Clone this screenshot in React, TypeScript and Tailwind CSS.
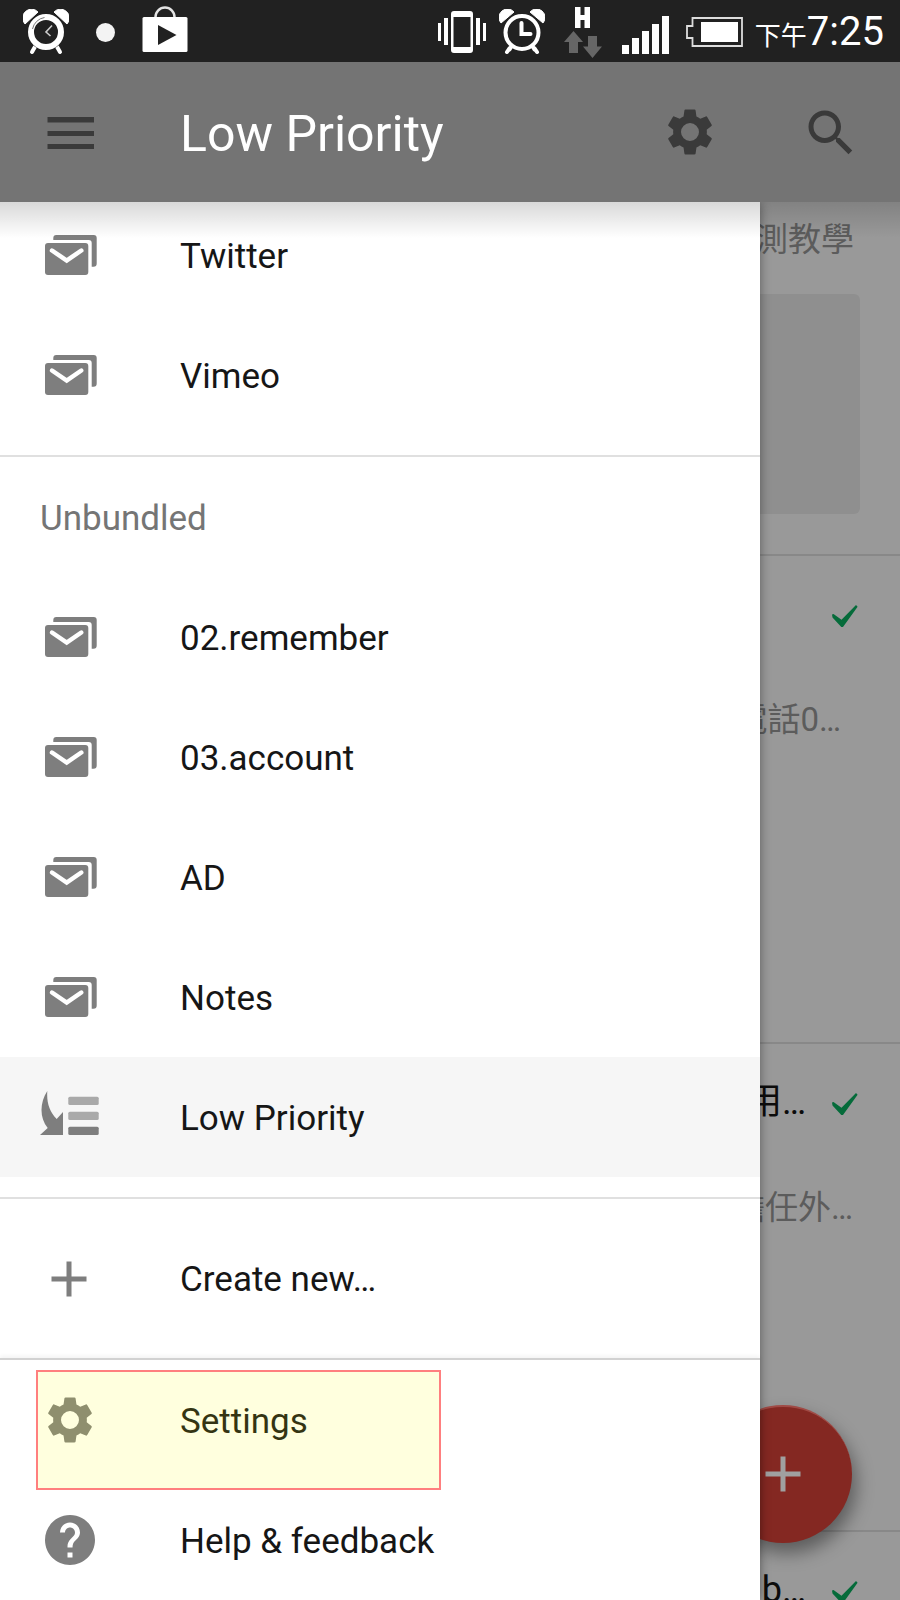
import type { ReactNode } from "react";

const GEAR =
  "M19.43 12.98c.04-.32.07-.64.07-.98s-.03-.66-.07-.98l2.11-1.65c.19-.15.24-.42.12-.64l-2-3.46c-.12-.22-.39-.3-.61-.22l-2.49 1c-.52-.4-1.08-.73-1.69-.98l-.38-2.65C14.46 2.18 14.25 2 14 2h-4c-.25 0-.46.18-.49.42l-.38 2.65c-.61.25-1.17.59-1.69.98l-2.49-1c-.23-.09-.49 0-.61.22l-2 3.46c-.13.22-.07.49.12.64l2.11 1.65c-.04.32-.07.65-.07.98s.03.66.07.98l-2.11 1.65c-.19.15-.24.42-.12.64l2 3.46c.12.22.39.3.61.22l2.49-1c.52.4 1.08.73 1.69.98l.38 2.65c.03.24.24.42.49.42h4c.25 0 .46-.18.49-.42l.38-2.65c.61-.25 1.17-.59 1.69-.98l2.49 1c.23.09.49 0 .61-.22l2-3.46c.12-.22.07-.49-.12-.64l-2.11-1.65zM12 16a4 4 0 1 1 0-8 4 4 0 0 1 0 8z";

function Icon({ children, viewBox = "0 0 60 60" }: { children: ReactNode; viewBox?: string }) {
  return (
    <svg viewBox={viewBox} className="size-[60px] shrink-0" fill="currentColor" aria-hidden="true">
      {children}
    </svg>
  );
}

const GearIcon = () => (
  <Icon viewBox="-1.35 -1.35 26.7 26.7">
    <path d={GEAR} />
  </Icon>
);

const MailIcon = () => (
  <Icon>
    <path d="M13.300 16V13a3 3 0 0 1 3-3H53.700a3 3 0 0 1 3 3v25.500a3.200 3.200 0 0 1-3.200 3.200H51.700V18a3 3 0 0 0-3-3H13.300z" />
    <rect x="5" y="18" width="43.300" height="32" rx="3" />
    <path
      d="M12 25.500l14.700 10 14.600-10"
      fill="none"
      stroke="#fff"
      strokeWidth="4.500"
      strokeLinecap="round"
    />
  </Icon>
);

const LowPriorityIcon = () => (
  <Icon>
    <path d="M7.300 4C-.5 16-.5 31 7.700 41L0 48h23V25l-6.300 7C9.500 24 6.500 16 7.300 4z" />
    <rect x="28.300" y="9.700" width="30.400" height="8.300" rx="1.500" fill="#a9a9a9" />
    <rect x="28.300" y="24.700" width="30.400" height="8.300" rx="1.500" fill="#a9a9a9" />
    <rect x="28.300" y="39.700" width="30.400" height="8.300" rx="1.500" />
  </Icon>
);

const PlusIcon = () => (
  <Icon>
    <path d="M26.500 13.500h5v15h15v5h-15v15h-5v-15h-15v-5h15z" />
  </Icon>
);

const HelpIcon = () => (
  <Icon viewBox="0 0 24 24">
    <path d="M12 2C6.480 2 2 6.480 2 12s4.480 10 10 10 10-4.480 10-10S17.520 2 12 2zm1 17h-2v-2h2v2zm2.070-7.750l-.9.920C13.450 12.900 13 13.500 13 15h-2v-.5c0-1.100.45-2.100 1.170-2.830l1.240-1.260c.37-.36.59-.86.59-1.410 0-1.100-.9-2-2-2s-2 .9-2 2H8c0-2.210 1.790-4 4-4s4 1.790 4 4c0 .88-.36 1.680-.93 2.250z" />
  </Icon>
);

const CheckIcon = () => (
  <svg viewBox="0 0 26 22" className="h-[22px] w-[26px] shrink-0" fill="#056b3a" aria-hidden="true">
    <path d="M0 9.500 1.500 9 9.500 14.800 24 0l1.600 1.800L11 22H9.300L.5 12.500z" />
  </svg>
);

function Row({ icon, label, active }: { icon: ReactNode; label: string; active?: boolean }) {
  return (
    <button
      type="button"
      className={
        active
          ? "flex h-[120px] w-full shrink-0 items-center gap-20 bg-[#f6f6f6] px-10 text-left"
          : "flex h-[120px] w-full shrink-0 items-center gap-20 px-10 text-left"
      }
    >
      <span className="text-[#7e7e7e]">{icon}</span>
      <span className="pt-1 text-[35px] leading-10 text-[#161616]">{label}</span>
    </button>
  );
}

function StatusBar() {
  return (
    <header className="flex h-[62px] shrink-0 items-center justify-between bg-[#212121] pt-0.5 pr-4 pl-[23px] text-white">
      <div className="flex items-center">
        <svg viewBox="0 0 46 46" className="size-[46px]" aria-label="Alarm">
          <path d="M2 15a8 8 0 0 1 13-12zM44 15A8 8 0 0 0 31 3z" fill="#fff" stroke="#fff" strokeWidth="1" strokeLinejoin="round" />
          <path d="M13 36l-4 7M33 36l4 7" stroke="#fff" strokeWidth="4" strokeLinecap="round" />
          <circle cx="23" cy="23" r="18.500" fill="#212121" />
          <circle cx="23" cy="23" r="15" fill="#212121" stroke="#fff" strokeWidth="6" />
          <path d="M9.500 20a14.500 14.500 0 0 1 12-11.500" fill="none" stroke="#777" strokeWidth="1" />
          <path d="M29 16.500l-6 6.500 4.500 4" fill="none" stroke="#ccc" strokeWidth="1.600" />
        </svg>
        <span className="ml-[27px] size-[19px] rounded-full bg-[#f3f3f3]" />
        <svg viewBox="0 0 46 48" className="mb-1.5 ml-[27px] h-[48px] w-[46px]" aria-label="Play Store">
          <path d="M13.500 14v-2a9.500 9.500 0 0 1 19 0v2" fill="none" stroke="#e4e4e4" strokeWidth="2.500" />
          <rect x=".5" y="12" width="45" height="35" rx="1.500" fill="#fff" />
          <path d="M16 20v20l18.500-10z" fill="#212121" />
        </svg>
      </div>
      <div className="flex items-center">
        <svg viewBox="0 0 48 42" className="h-[42px] w-[48px]" fill="#fff" aria-label="Vibrate">
          <rect y="12" width="3" height="18" />
          <rect x="6" y="7" width="4" height="27" />
          <rect x="38" y="7" width="4" height="27" />
          <rect x="45" y="12" width="3" height="18" />
          <path fillRule="evenodd" d="M16 0h16a3 3 0 0 1 3 3v36a3 3 0 0 1-3 3H16a3 3 0 0 1-3-3V3a3 3 0 0 1 3-3zm-.5 6v30h17V6z" />
        </svg>
        <svg viewBox="0 0 46 46" className="ml-[13px] size-[46px]" aria-label="Alarm set">
          <path d="M2 14a8 8 0 0 1 13-11zM44 14A8 8 0 0 0 31 3z" fill="#fff" stroke="#fff" strokeWidth="1" strokeLinejoin="round" />
          <path d="M12 37l-4 6M34 37l4 6" stroke="#fff" strokeWidth="4" strokeLinecap="round" />
          <circle cx="23" cy="23.500" r="19.500" fill="#212121" />
          <circle cx="23" cy="23.500" r="16.500" fill="#212121" stroke="#fff" strokeWidth="4" />
          <path d="M12 38l-1.500 2.500M34 38l1.500 2.500" stroke="#fff" strokeWidth="4" strokeLinecap="round" />
          <path d="M22.500 14v11h9" fill="none" stroke="#fff" strokeWidth="4" strokeLinecap="round" />
        </svg>
        <svg viewBox="0 0 38 52" className="ml-[19px] h-[52px] w-[38px]" aria-label="Mobile data">
          <path d="M11 1h5.500v8h4V1H26v21h-5.500v-8h-4v8H11z" fill="#fff" />
          <path d="M9.500 25l9.500 11h-5v11H5V36H0zM28.500 52L38 40.500h-5V30h-9v10.500h-5z" fill="#666" />
        </svg>
        <svg viewBox="0 0 47 38" className="mt-[5px] ml-5 h-[38px] w-[47px]" fill="#fff" aria-label="Signal">
          <rect y="29" width="7" height="9" />
          <rect x="10" y="22" width="7" height="16" />
          <rect x="20" y="15" width="7" height="23" />
          <rect x="30" y="8" width="7" height="30" />
          <rect x="40" width="7" height="38" />
        </svg>
        <svg viewBox="0 0 57 30" className="ml-[17px] h-[30px] w-[57px]" aria-label="Battery">
          <path d="M6.500 1H56v28H6.500v-8H1V9h5.500z" fill="none" stroke="#ddd" strokeWidth="1.800" />
          <rect x="15" y="5" width="37" height="20" fill="#fff" />
        </svg>
        <p className="ml-3 flex items-baseline leading-[46px]">
          <span className="font-['Noto_Sans_CJK_TC',sans-serif] text-[26px] leading-10">下午</span>
          <span className="text-[40px]">7:25</span>
        </p>
      </div>
    </header>
  );
}

function MailItem({ title, body }: { title?: string; body: ReactNode }) {
  return (
    <article className="flex h-[488px] shrink-0 flex-col border-b-2 border-[#888888]">
      <div className="mt-9 flex h-12 items-center justify-end gap-[26px] pr-[42px]">
        {title && <h2 className="whitespace-nowrap pb-1 text-[36px] leading-[48px] text-[#0c0c0c]">{title}</h2>}
        <CheckIcon />
      </div>
      <div className="mt-14 flex h-12 items-center justify-end whitespace-nowrap text-[33px] leading-[48px] text-[#5c5c5c]">
        {body}
      </div>
    </article>
  );
}

export default function App() {
  return (
    <div className="flex h-screen flex-col overflow-hidden bg-[#999999] font-[Roboto,'Noto_Sans_CJK_TC',sans-serif]">
      <StatusBar />
      <div className="relative z-20 flex h-[140px] shrink-0 items-center gap-20 bg-[#747474] px-10 text-[#3a3a3a]">
        <button type="button" aria-label="Menu">
          <Icon>
            <path d="M7.500 15H54v5.500H7.500zM7.500 29H54v5H7.500zM7.500 42H54v5H7.500z" />
          </Icon>
        </button>
        <h1 className="flex-1 pt-1 text-[50px] leading-[60px] text-white">Low Priority</h1>
        <button type="button" aria-label="Settings">
          <GearIcon />
        </button>
        <button type="button" aria-label="Search">
          <Icon viewBox="-0.4 -0.4 24 24">
            <path d="M15.500 14h-.79l-.28-.27C15.410 12.590 16 11.110 16 9.500 16 5.910 13.090 3 9.500 3S3 5.910 3 9.500 5.910 16 9.500 16c1.610 0 3.090-.59 4.230-1.570l.27.28v.79l5 4.990L20.490 19l-4.990-5zm-6 0C7.010 14 5 11.990 5 9.500S7.010 5 9.500 5 14 7.010 14 9.500 11.990 14 9.500 14z" />
          </Icon>
        </button>
      </div>

      <div className="relative flex min-h-0 flex-1">
        <nav className="z-10 flex min-w-0 flex-1 flex-col bg-white shadow-[0_0_10px_rgba(0,0,0,0.4)]">
          <div className="flex min-h-0 flex-1 flex-col justify-end overflow-hidden">
            <section className="shrink-0 border-b-2 border-[#e0e0e0] pb-5">
              <Row icon={<MailIcon />} label="Twitter" />
              <Row icon={<MailIcon />} label="Vimeo" />
            </section>
            <section className="shrink-0 border-b-2 border-[#e0e0e0] pb-5">
              <h2 className="flex h-[120px] items-center px-10 pt-[3px] text-[35px] leading-10 text-[#757575]">Unbundled</h2>
              <Row icon={<MailIcon />} label="02.remember" />
              <Row icon={<MailIcon />} label="03.account" />
              <Row icon={<MailIcon />} label="AD" />
              <Row icon={<MailIcon />} label="Notes" />
              <Row icon={<LowPriorityIcon />} label="Low Priority" active />
            </section>
            <section className="shrink-0 pt-[19px] pb-5">
              <Row icon={<PlusIcon />} label="Create new…" />
            </section>
          </div>
          <div className="relative shrink-0 border-t-2 border-[#d2d2d2] shadow-[0_-2px_4px_rgba(0,0,0,0.05)]">
            <Row icon={<GearIcon />} label="Settings" />
            <Row icon={<HelpIcon />} label="Help & feedback" />
            <div className="pointer-events-none absolute top-[10px] left-9 h-[120px] w-[405px] border-2 border-[#ff7f7f] bg-[#ffff00]/13" />
          </div>
        </nav>

        <main className="relative flex w-[140px] shrink-0 flex-col overflow-hidden">
          <article className="flex h-[354px] shrink-0 flex-col border-b-2 border-[#888888] pt-3.5">
            <p className="flex justify-end whitespace-nowrap pr-[46px] text-[33px] leading-[48px] text-[#5c5c5c]">
              評測教學
            </p>
            <div className="mt-[30px] mr-10 h-[220px] rounded-r-md bg-[#8f8f8f]" />
          </article>
          <MailItem body={<span className="pr-[59px]">電話0…</span>} />
          <MailItem title="使用…" body={<span className="pr-[47px]">擔任外…</span>} />
          <MailItem title="b…" body={<span className="pr-[47px]">…</span>} />
          <button
            type="button"
            aria-label="Compose"
            className="absolute right-12 bottom-[57px] flex size-[138px] items-center justify-center rounded-full border-t-2 border-[#a04a45] bg-[#842822] pb-1 pl-0.5 text-[#a0a0a0] shadow-[4px_10px_18px_rgba(0,0,0,0.4)]"
          >
            <PlusIcon />
          </button>
        </main>
        <div className="pointer-events-none absolute inset-x-0 top-0 z-20 h-9 bg-linear-to-b from-black/15 to-transparent" />
      </div>
    </div>
  );
}
